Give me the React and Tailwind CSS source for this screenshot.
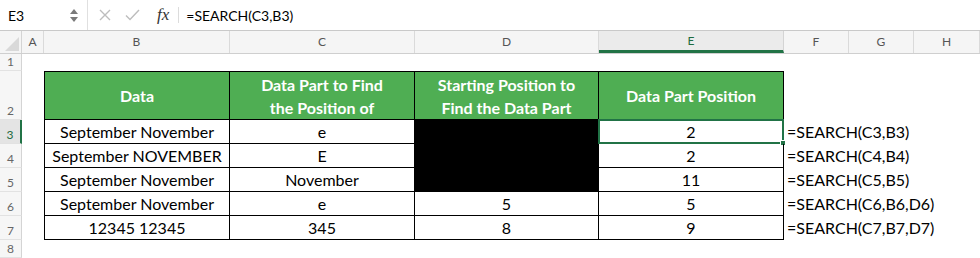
const columns = [
  { key: 'A', w: 'w-[22px]' },
  { key: 'B', w: 'w-[186px]' },
  { key: 'C', w: 'w-[185px]' },
  { key: 'D', w: 'w-[184px]' },
  { key: 'E', w: 'w-[185px]' },
  { key: 'F', w: 'w-[65px]' },
  { key: 'G', w: 'w-[65px]' },
  { key: 'H', w: 'w-[66px]' },
]

const headers = [
  ['Data'],
  ['Data Part to Find', 'the Position of'],
  ['Starting Position to', 'Find the Data Part'],
  ['Data Part Position'],
]

const rows = [
  { n: 3, data: 'September November', part: 'e', start: null, pos: '2', formula: '=SEARCH(C3,B3)' },
  { n: 4, data: 'September NOVEMBER', part: 'E', start: null, pos: '2', formula: '=SEARCH(C4,B4)' },
  { n: 5, data: 'September November', part: 'November', start: null, pos: '11', formula: '=SEARCH(C5,B5)' },
  { n: 6, data: 'September November', part: 'e', start: '5', pos: '5', formula: '=SEARCH(C6,B6,D6)' },
  { n: 7, data: '12345 12345', part: '345', start: '8', pos: '9', formula: '=SEARCH(C7,B7,D7)' },
]

function RowNum({ n, active }) {
  return (
    <div
      className={
        'flex items-end justify-center pb-[2px] text-[12px] leading-none border-b border-[#e2e2e2] ' +
        (active
          ? 'bg-[#e4e4e4] text-[#1e6b40] border-r-2 border-r-[#217346]'
          : 'bg-[#f6f6f6] text-[#666] border-r border-r-[#d4d4d4]')
      }
    >
      {n}
    </div>
  )
}

function FormulaBar() {
  return (
    <div className="flex h-[31px] items-center border-b border-[#c9c9c9] bg-white text-[14px] text-black">
      <div className="flex h-full w-[88px] items-center justify-between border-r border-[#e0e0e0] pl-[8px] pr-[9px]">
        <span>E3</span>
        <div className="flex flex-col items-center gap-[3px]">
          <svg width="8" height="5" viewBox="0 0 8 5"><path d="M0 5 L4 0 L8 5 Z" fill="#7a7a7a" /></svg>
          <svg width="8" height="5" viewBox="0 0 8 5"><path d="M0 0 L4 5 L8 0 Z" fill="#7a7a7a" /></svg>
        </div>
      </div>
      <div className="flex h-full items-center">
        <svg className="ml-[11px]" width="12" height="12" viewBox="0 0 12 12">
          <path d="M1 1 L11 11 M11 1 L1 11" stroke="#bdbdbd" strokeWidth="1.4" />
        </svg>
        <svg className="ml-[14px]" width="15" height="12" viewBox="0 0 15 12">
          <path d="M1 6.5 L5 10.5 L14 1" stroke="#bdbdbd" strokeWidth="1.4" fill="none" />
        </svg>
        <span className="ml-[17px] font-['Liberation_Serif',serif] text-[17px] italic text-[#333]">fx</span>
        <div className="ml-[9px] h-[16px] border-l border-[#dcdcdc]" />
        <span className="ml-[7px]">=SEARCH(C3,B3)</span>
      </div>
    </div>
  )
}

function ColumnHeader() {
  return (
    <div className="flex h-[23px] border-b border-[#cfcfcf] bg-[#f5f5f5] text-[12px] text-[#555]">
      <div className="relative w-[22px] border-r border-[#d4d4d4]">
        <svg className="absolute bottom-[2px] right-[2px]" width="14" height="14" viewBox="0 0 14 14">
          <path d="M14 0 L14 14 L0 14 Z" fill="#d9d9d9" />
        </svg>
      </div>
      {columns.map((c) => (
        <div
          key={c.key}
          className={
            c.w +
            ' flex items-center justify-center ' +
            (c.key === 'E'
              ? 'bg-[#ebebeb] text-[#1e6b40] border-b-[3px] border-b-[#217346] border-r border-r-[#d4d4d4]'
              : 'border-r border-[#dadada]')
          }
        >
          {c.key}
        </div>
      ))}
    </div>
  )
}

export default function App() {
  return (
    <div className="h-[258px] w-[980px] overflow-hidden bg-white font-['Lato',sans-serif]">
      <FormulaBar />
      <ColumnHeader />
      <div className="grid grid-cols-[22px_22px_186px_185px_184px_185px_65px_65px_66px] grid-rows-[17px_49px_24px_24px_24px_24px_24px_18px] text-[16px] text-black">
        <RowNum n={1} />
        <div className="col-span-8" />

        <RowNum n={2} />
        <div />
        {headers.map((lines, i) => (
          <div
            key={i}
            className={
              'flex flex-col items-center justify-center border-y border-r border-black bg-[#4fae53] text-[16px] font-bold leading-[23px] text-white ' +
              (i === 0 ? 'border-l' : '')
            }
          >
            {lines.map((l) => (
              <span key={l}>{l}</span>
            ))}
          </div>
        ))}
        <div className="col-span-3" />

        {rows.map((r) => (
          <div key={r.n} className="contents">
            <RowNum n={r.n} active={r.n === 3} />
            <div />
            <div className="flex items-center justify-center border-x border-b border-black">{r.data}</div>
            <div className="flex items-center justify-center border-r border-b border-black">{r.part}</div>
            {r.n === 3 && <div className="row-span-3 border-r border-b border-black bg-black" />}
            {r.start && (
              <div className="flex items-center justify-center border-r border-b border-black">{r.start}</div>
            )}
            <div className="relative flex items-center justify-center border-r border-b border-black">
              {r.pos}
              {r.n === 3 && (
                <div className="absolute -left-[1px] -top-[1px] -right-[1px] -bottom-[1px] border-2 border-[#217346]">
                  <div className="absolute -bottom-[4px] -right-[4px] h-[6px] w-[6px] border border-white bg-[#217346]" />
                </div>
              )}
            </div>
            <div className="relative z-10 flex items-center whitespace-nowrap pl-[3px]">{r.formula}</div>
            <div />
            <div />
          </div>
        ))}

        <RowNum n={8} />
        <div className="col-span-8" />
      </div>
    </div>
  )
}
